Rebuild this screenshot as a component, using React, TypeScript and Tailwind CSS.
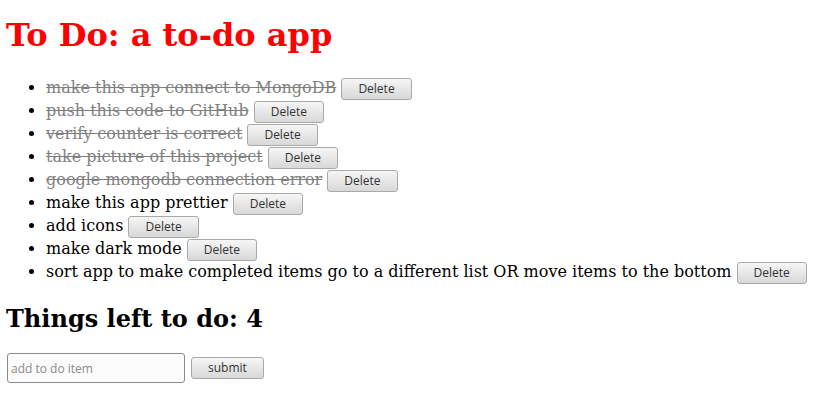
const TODOS = [
  { id: 1, text: 'make this app connect to MongoDB', done: true },
  { id: 2, text: 'push this code to GitHub', done: true },
  { id: 3, text: 'verify counter is correct', done: true },
  { id: 4, text: 'take picture of this project', done: true },
  { id: 5, text: 'google mongodb connection error', done: true },
  { id: 6, text: 'make this app prettier', done: false },
  { id: 7, text: 'add icons', done: false },
  { id: 8, text: 'make dark mode', done: false },
  { id: 9, text: 'sort app to make completed items go to a different list OR move items to the bottom', done: false },
]

const BTN =
  "inline-block h-[22px] rounded-[3px] border border-[#a9a9a9] bg-linear-to-b from-[#f6f6f6] to-[#d8d8d8] px-4 font-['Open_Sans',sans-serif] text-[12px] leading-[20px] text-[#333]"

export default function App() {
  const left = TODOS.filter(t => !t.done).length

  return (
    <div className="min-h-screen bg-white px-[6px] pt-[17px] font-['DejaVu_Serif',serif] text-base text-black">
      <h1 className="text-[32px] leading-[37px] font-bold text-[#ff0000]">To Do: a to-do app</h1>

      {/* list */}
      <ul className="mt-[22px] list-disc pl-10">
        {TODOS.map(todo => (
          <li key={todo.id} className="h-[23px] leading-[23px]">
            <span className={todo.done ? 'text-[gray] line-through' : ''}>{todo.text}</span>{' '}
            <button className={BTN}>Delete</button>
          </li>
        ))}
      </ul>

      <h2 className="mt-[22px] text-[24px] leading-[28px] font-bold">Things left to do: {left}</h2>

      <form className="mt-[20px] ml-px flex items-center gap-[6px]" onSubmit={e => e.preventDefault()}>
        <input
          className="h-[30px] w-[178px] rounded-[3px] border border-[#8a8a8a] bg-[#fcfcfc] px-[3px] font-['Open_Sans',sans-serif] text-[12px] text-[#333] placeholder:text-[#8a8a8a] focus:outline-none"
          placeholder="add to do item"
        />
        <button type="submit" className={BTN}>
          submit
        </button>
      </form>
    </div>
  )
}
